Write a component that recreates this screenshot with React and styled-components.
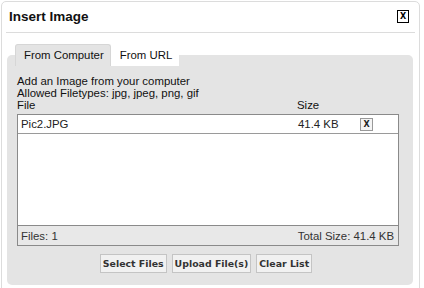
import React from "react";
import styled, { createGlobalStyle } from "styled-components";

const GlobalStyle = createGlobalStyle`
  body {
    margin: 0;
    background: #ffffff;
    font-family: "Liberation Sans", Arial, sans-serif;
    font-size: 11.4px;
    color: #111;
  }
`;

const Dialog = styled.div`
  margin: 1px 0 0 1px;
  width: 419px;
  height: 300px;
  border: 1px solid #dcdcdc;
  border-radius: 5px;
  background: #fff;
  box-sizing: border-box;
`;

const Header = styled.div`
  display: flex;
  align-items: center;
  justify-content: space-between;
  height: 31px;
  margin: 0 4px;
  padding: 0 6px 1px 3px;
  box-sizing: border-box;
  border-bottom: 1px solid #dcdcdc;
`;

const Title = styled.h1`
  margin: 0 0 1px;
  font-size: 13.5px;
  font-weight: bold;
  color: #111;
`;

const CloseBox = styled.button`
  width: 12px;
  height: 13px;
  padding: 0;
  border: 1px solid #000;
  background: #fff;
  font-family: "DejaVu Sans", sans-serif;
  font-size: 8px;
  font-weight: bold;
  line-height: 10px;
  color: #000;
`;

const Body = styled.div`
  padding: 11px 6px 0 5px;
`;

const TabsLayer = styled.div`
  position: relative;
  z-index: 1;
`;

const Tabs = styled.div`
  display: flex;
  padding-left: 8px;
`;

const Tab = styled.div`
  padding: 4px 6px 4px 8px;
  line-height: 13px;
  color: #111;
  background: ${(p) => (p.$active ? "#e4e4e4" : "#ffffff")};
  border: 1px solid ${(p) => (p.$active ? "#d6d6d6" : "#ffffff")};
  border-bottom: none;
  border-radius: 3px 3px 0 0;
`;

const Panel = styled.div`
  margin-top: -11px;
  background: #e4e4e4;
  border-radius: 5px;
  height: 230px;
  padding: 20px 9px 0 10px;
  box-sizing: border-box;
`;

const Line = styled.div`
  line-height: 12px;
  color: #111;
`;

const ColumnHead = styled.div`
  display: grid;
  grid-template-columns: 280px 1fr;
  line-height: 12px;
  color: #111;
`;

const ListBox = styled.div`
  margin-top: 3px;
  width: 382px;
  border: 1px solid #8a8a8a;
  background: #fff;
  box-sizing: border-box;
`;

const Rows = styled.div`
  height: 110px;
`;

const Row = styled.div`
  display: grid;
  grid-template-columns: 277px 62px 1fr;
  align-items: center;
  height: 18px;
  padding-left: 3px;
  border-bottom: 1px solid #9a9a9a;
  color: #222;
`;

const RemoveBtn = styled.span`
  display: inline-flex;
  align-items: center;
  justify-content: center;
  width: 11px;
  height: 11px;
  border: 1px solid #999;
  background: #f4f4f4;
  font-family: "DejaVu Sans", sans-serif;
  font-size: 8px;
  font-weight: bold;
  color: #222;
`;

const Footer = styled.div`
  display: flex;
  justify-content: space-between;
  align-items: center;
  height: 19px;
  padding: 0 4px 0 3px;
  background: #e8e8e8;
  border-top: 1px solid #8a8a8a;
  color: #333;
`;

const Buttons = styled.div`
  display: flex;
  justify-content: center;
  gap: 5px;
  margin-top: 8px;
  padding-right: 9px;
`;

const Btn = styled.button`
  height: 19px;
  padding: 0 2px;
  border: 1px solid #c4c4c4;
  background: #f1f1f1;
  font-family: "DejaVu Sans", Verdana, sans-serif;
  font-size: 9.4px;
  font-weight: bold;
  color: #333;
`;

export default function App() {
  return (
    <>
      <GlobalStyle />
      <Dialog>
        <Header>
          <Title>Insert Image</Title>
          <CloseBox>X</CloseBox>
        </Header>
        <Body>
          <TabsLayer>
            <Tabs>
              <Tab $active>From Computer</Tab>
              <Tab>From URL</Tab>
            </Tabs>
          </TabsLayer>
          <Panel>
            <Line>Add an Image from your computer</Line>
            <Line>Allowed Filetypes: jpg, jpeg, png, gif</Line>
            <ColumnHead>
              <span>File</span>
              <span>Size</span>
            </ColumnHead>
            <ListBox>
              <Rows>
                <Row>
                  <span>Pic2.JPG</span>
                  <span>41.4 KB</span>
                  <span>
                    <RemoveBtn>X</RemoveBtn>
                  </span>
                </Row>
              </Rows>
              <Footer>
                <span>Files: 1</span>
                <span>Total Size: 41.4 KB</span>
              </Footer>
            </ListBox>
            <Buttons>
              <Btn>Select Files</Btn>
              <Btn>Upload File(s)</Btn>
              <Btn>Clear List</Btn>
            </Buttons>
          </Panel>
        </Body>
      </Dialog>
    </>
  );
}
